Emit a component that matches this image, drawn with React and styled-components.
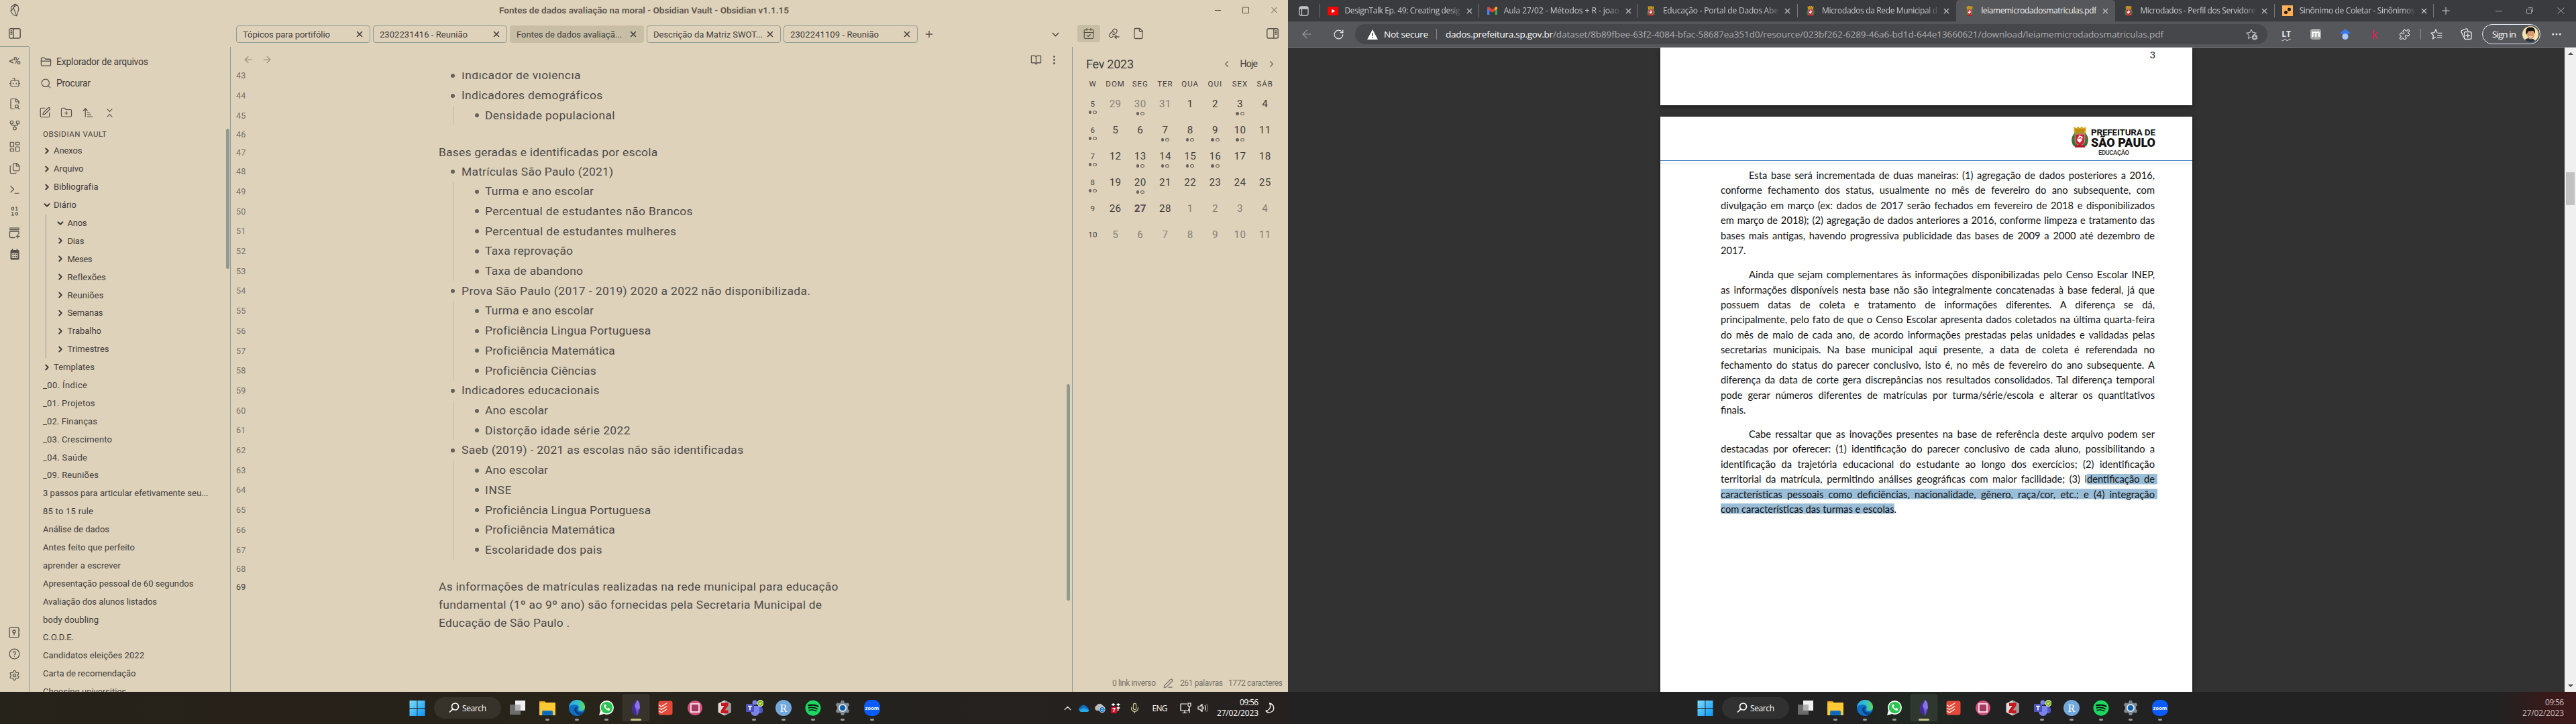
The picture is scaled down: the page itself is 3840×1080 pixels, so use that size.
import React, { useLayoutEffect, useRef } from "react";
import styled, { createGlobalStyle, css } from "styled-components";
import {
  Bot, FileSearch2, GitFork, LayoutDashboard, Files, Terminal, Binary, Settings,
  FolderClosed, Search, SquarePen, FolderPlus, ArrowUpNarrowWide, ChevronsDownUp,
  ChevronRight, ChevronDown, ChevronUp, ChevronLeft, X, Plus, ArrowLeft, ArrowRight,
  BookOpen, EllipsisVertical, CalendarCheck, File, PenLine, Puzzle, RotateCw,
  Mic, Ellipsis,
} from "lucide-react";
import { FaSpotify } from "react-icons/fa";

const Global = createGlobalStyle`
  * { box-sizing: border-box; }
  html, body { margin: 0; padding: 0; background: #323232; overflow: hidden; }
  svg { display: block; flex: none; }
`;

const plex = `Roboto, "Liberation Sans", sans-serif`;
const segoe = `"Open Sans", "Noto Sans", sans-serif`;
const c = {
  paper: "#dfd2ba", line: "#8f9a92", ink: "#3f3e3c", icon: "#55514a", muted: "#77736a",
  active: "#c8bea5",
};

/* ---------- text fitted to a measured width by tracking ---------- */
const FitSpan = styled.span`
  display: inline-block;
  white-space: pre;
  flex: none;
`;
function Fit({ w, children, className }) {
  const ref = useRef(null);
  useLayoutEffect(() => {
    const el = ref.current;
    el.style.letterSpacing = "0px";
    const n = el.textContent.length;
    const natural = el.getBoundingClientRect().width;
    if (w && n > 1) {
      const ls = (w - natural) / (n - 1);
      el.style.letterSpacing = ls + "px";
      el.style.marginRight = -ls + "px";
    }
  }, [w, children]);
  return <FitSpan ref={ref} className={className}>{children}</FitSpan>;
}

/* ---------- shell ---------- */
const Desktop = styled.div`
  display: grid;
  grid-template-columns: 1920px 1920px;
  width: 3840px;
  height: 1080px;
`;
const Screen = styled.div`
  display: flex;
  flex-direction: column;
  height: 1080px;
  overflow: hidden;
`;

/* ---------- notes window ---------- */
const NotesWindow = styled.div`
  display: flex;
  flex-direction: column;
  height: 1032px;
  background: ${c.paper};
  color: ${c.ink};
  font-family: ${plex};
  overflow: hidden;
`;
const TitleRow = styled.div`
  display: flex;
  align-items: center;
  height: 30px;
`;
const LogoCell = styled.div`
  width: 126px;
  padding-left: 15px;
`;
const Title = styled.div`
  flex: 1;
  text-align: center;
  font-size: 13.5px;
  font-weight: 600;
  color: #5c564c;
`;
const WinCell = styled.div`
  width: 42px;
  display: flex;
  justify-content: center;
  color: #5c564c;
`;
const TabRow = styled.div`
  display: flex;
  height: 40px;
`;
const Corner = styled.div`
  width: 43px;
  display: flex;
  align-items: center;
  justify-content: center;
  color: ${c.icon};
  border-bottom: 1px solid ${c.line};
`;
const NoteTabs = styled.div`
  display: flex;
  gap: 4px;
  padding: 8px 0 0 309px;
  width: 1555px;
  color: ${c.icon};
`;
const NoteTab = styled.div`
  display: flex;
  align-items: center;
  justify-content: space-between;
  width: 200px;
  height: 26px;
  padding: 0 8px 0 9px;
  border: 1px solid ${(p) => (p.$active ? c.active : c.line)};
  background: ${(p) => (p.$active ? c.active : "transparent")};
  border-radius: 4px;
  font-size: 13px;
  color: ${c.ink};
`;
const TabButton = styled.div`
  width: ${(p) => p.$w || 26}px;
  height: 26px;
  display: flex;
  align-items: center;
  justify-content: center;
  margin-left: ${(p) => (p.$end ? "auto" : "0")};
  margin-right: ${(p) => (p.$end ? "12px" : "0")};
`;
const SideTabs = styled.div`
  display: flex;
  flex: 1;
  gap: 3px;
  padding: 7px 14px 0 8px;
  color: ${c.icon};
`;
const SideTab = styled.div`
  width: 34px;
  height: 26px;
  border-radius: 4px;
  display: flex;
  align-items: center;
  justify-content: center;
  background: ${(p) => (p.$active ? c.active : "transparent")};
  margin-left: ${(p) => (p.$end ? "auto" : "0")};
  margin-right: ${(p) => (p.$end ? "-8px" : "0")};
`;
const NotesBody = styled.div`
  display: grid;
  grid-template-columns: 44px 300px 1255px 321px;
  height: 962px;
`;
const Ribbon = styled.div`
  display: flex;
  flex-direction: column;
  padding: 5px 0 9px;
  border-right: 1px solid ${c.line};
  color: ${c.icon};
`;
const RibbonCell = styled.div`
  height: 32px;
  display: flex;
  align-items: center;
  justify-content: center;
  font-size: 15px;
  font-weight: 500;
  letter-spacing: -1px;
`;
const Spacer = styled.div`
  flex: 1;
`;
const Explorer = styled.div`
  position: relative;
  display: flex;
  flex-direction: column;
  height: 962px;
  padding: 6px 0 0 16px;
  border-right: 1px solid ${c.line};
  overflow: hidden;
`;
const ExplorerAction = styled.div`
  display: flex;
  align-items: center;
  flex: none;
  gap: 7px;
  height: 32px;
  font-size: 14px;
  color: ${c.ink};
  svg { color: ${c.icon}; }
`;
const ExplorerTools = styled.div`
  display: flex;
  flex: none;
  height: 32px;
  margin: 12px 0 0 -9px;
  color: ${c.icon};
`;
const ToolCell = styled.div`
  width: 32px;
  display: flex;
  align-items: center;
  justify-content: center;
`;
const VaultName = styled.div`
  height: 27.5px;
  flex: none;
  padding: 0 0 0 4px;
  line-height: 32px;
  font-size: 11.5px;
`;
const TreeRow = styled.div`
  display: flex;
  align-items: center;
  flex: none;
  height: 26.9px;
  margin-left: ${(p) => (p.$nested ? "8px" : "0")};
  border-left: ${(p) => (p.$nested ? `1px solid ${c.line}` : "0")};
  padding-left: ${(p) => (p.$nested ? "15.5px" : "4px")};
  font-size: 13px;
  gap: 3.5px;
  svg { margin-left: -1.5px; }
`;
const Thumb = styled.div`
  position: absolute;
  border-radius: 3px;
  background: #8f9a92;
  top: ${(p) => p.$top}px;
  right: ${(p) => p.$right}px;
  width: 5px;
  height: ${(p) => p.$h}px;
`;
const Editor = styled.div`
  position: relative;
  display: flex;
  flex-direction: column;
  border-right: 1px solid ${c.line};
  overflow: hidden;
`;
const ViewHeader = styled.div`
  display: flex;
  align-items: center;
  height: 38px;
  flex: none;
  padding: 0 18px 0 18px;
  color: ${c.icon};
`;
const NavArrows = styled.div`
  display: flex;
  gap: 12px;
  color: #968e7c;
`;
const ViewActions = styled.div`
  display: flex;
  align-items: center;
  gap: 10px;
  margin-left: auto;
`;
const Scroll = styled.div`
  flex: 1;
  overflow: hidden;
`;
const Lines = styled.div`
  margin-top: -9.9px;
`;
const LineRow = styled.div`
  display: flex;
  min-height: ${(p) => (p.$list ? 29.7 : 27)}px;
  padding-left: 8px;
`;
const LineNo = styled.div`
  width: 302px;
  line-height: ${(p) => (p.$list ? 29.7 : 27)}px;
  font-size: 12.5px;
  letter-spacing: 0.1px;
  color: ${(p) => (p.$current ? c.ink : c.muted)};
`;
const LineText = styled.div`
  display: flex;
  align-items: center;
  font-size: 17.4px;
  line-height: 27px;
  font-weight: 400;
  color: #4c4b4a;
  ${(p) => p.$level === 1 && css`padding-left: 18px;`}
  ${(p) => p.$level === 2 && css`
    margin-left: 21px;
    border-left: 1px solid #c2b8a2;
    padding-left: 32px;
  `}
`;
const Bullet = styled.span`
  width: 6px;
  height: 6px;
  border-radius: 50%;
  background: #66625b;
  margin-right: ${(p) => (p.$level === 1 ? 10 : 9)}px;
`;
const Paragraph = styled.div`
  display: flex;
  flex-direction: column;
  align-items: flex-start;
  font-size: 17.4px;
  line-height: 27px;
  color: #4c4b4a;
`;
const RightPane = styled.div`
  display: flex;
  flex-direction: column;
  padding: 9px 0 0;
`;
const CalHead = styled.div`
  display: flex;
  align-items: center;
  height: 32px;
  padding: 0 17px 0 20px;
  font-size: 18px;
`;
const CalNav = styled.div`
  display: flex;
  align-items: center;
  gap: 13px;
  margin-left: auto;
  font-size: 14px;
  svg { color: ${c.muted}; }
`;
const CalGrid = styled.div`
  display: grid;
  grid-template-columns: 30px repeat(7, 37.2px);
  grid-template-rows: 24.5px;
  grid-auto-rows: 39px;
  margin-left: 15px;
`;
const CalLabel = styled.div`
  text-align: center;
  line-height: 28px;
  font-size: 11.5px;
  letter-spacing: 1px;
`;
const Day = styled.div`
  display: flex;
  flex-direction: column;
  align-items: center;
  padding-top: 9.5px;
  line-height: 20px;
  font-size: ${(p) => (p.$week ? 11.5 : 15.2)}px;
  letter-spacing: 0.4px;
  font-weight: ${(p) => (p.$today ? 700 : 400)};
  color: ${(p) => (p.$today ? "#5f4a55" : p.$dim ? "#85817a" : c.ink)};
`;
const Dots = styled.div`
  display: flex;
  gap: 2px;
  margin-top: ${(p) => (p.$week ? -0.5 : 1.5)}px;
`;
const Dot = styled.i`
  width: ${(p) => (p.$hollow ? 6 : 4.5)}px;
  height: 5px;
  border-radius: 50%;
  border: 1px solid #66625b;
  background: ${(p) => (p.$hollow ? "transparent" : "#66625b")};
`;
const Status = styled.div`
  display: flex;
  align-items: center;
  justify-content: flex-end;
  height: 26px;
  margin-top: auto;
  padding-right: 8px;
  font-size: 12px;
  color: ${c.muted};
`;
const StatusItem = styled.span`
  display: flex;
  margin-left: ${(p) => p.$gap || 8}px;
`;

/* ---------- custom line icons ---------- */
const GemLine = () => (
  <svg width="14" height="20" viewBox="0 0 14 20" fill="none" stroke="#55514a" strokeWidth="1.1" strokeLinejoin="round">
    <path d="M7.5 1 11.5 3.2 13 8.5 9.8 18.6 5 17.5 1.2 12.2 2 5z" />
    <path d="M7.5 1 5 6.5 1.2 12.2M5 6.5 9.8 18.6M5 6.5 8 3.6 11.5 3.2" />
  </svg>
);
const Panel = ({ flip }) => (
  <svg width="18" height="16" viewBox="0 0 18 16" fill="none" stroke="currentColor" strokeWidth="1.4">
    <rect x="0.8" y="0.8" width="16.4" height="14.2" rx="2" />
    <path d={flip ? "M10.8 1v14M12.6 4h2.8M12.6 6.5h2.8M12.6 9h2.8" : "M7.2 1v14M2.6 4h2.8M2.6 6.5h2.8M2.6 9h2.8"} />
  </svg>
);
const PlusBox = () => (
  <svg width="17" height="17" viewBox="0 0 17 17" fill="none" stroke="currentColor" strokeWidth="1.3" strokeLinecap="round">
    <path d="M1.5 1.2h14M1.5 3.6h14M15 10V7.5q0-1.5-1.5-1.5H3Q1.5 6 1.5 7.5V14q0 1.5 1.5 1.5h6M13.5 11v5M11 13.5h5" />
  </svg>
);
const CalSolid = () => (
  <svg width="14" height="17" viewBox="0 0 14 17">
    <rect x="0.5" y="2" width="13" height="14.5" rx="1.5" fill="#55514a" />
    <path d="M3.5 0v3M10.5 0v3" stroke="#55514a" strokeWidth="1.5" />
    <path d="M2.5 6.5h9v7.5h-9z" fill={c.paper} />
    <path d="M3.5 8.4h7M3.5 11.8h7" stroke="#55514a" strokeWidth="1.7" strokeDasharray="1.6 1.1" />
  </svg>
);
const VaultIcon = () => (
  <svg width="17" height="17" viewBox="0 0 17 17" fill="none" stroke="currentColor" strokeWidth="1.3">
    <rect x="1" y="1.2" width="14" height="14.5" rx="1.5" />
    <circle cx="8" cy="7" r="2" /><path d="M8 9v3.5M15.6 4v2M15.6 11v2" />
  </svg>
);
const HelpIcon = () => (
  <svg width="17" height="17" viewBox="0 0 24 24" fill="none" stroke="currentColor" strokeWidth="1.8" strokeLinecap="round">
    <circle cx="12" cy="12" r="10.5" /><path d="M9 9a3 3 0 0 1 5.8 1c0 2-2.8 2.4-2.8 4M12 17.5v.1" />
  </svg>
);
const LinkIn = () => (
  <svg width="17" height="17" viewBox="0 0 17 17" fill="none" stroke="currentColor" strokeWidth="1.3" strokeLinecap="round">
    <path d="M6.200 8.600c1.500 1.300 3.500.8 4.700-.5l1.600-2c2.200-3-2.200-6.700-4.700-3.800L6.600 3.700" />
    <path d="M8.800 6.200c-1.500-1.300-3.500-.8-4.700.5l-1.900 2.400c-2.200 3 2 6.300 4.500 3.500l.9-1" />
    <path d="M16 13h-6M12 10.800 9.800 13l2.200 2.300" />
  </svg>
);

const noteTabs = [
  ["Tópicos para portifólio", 130],
  ["2302231416 - Reunião", 131],
  ["Fontes de dados avaliaçã...", 157, true],
  ["Descrição da Matriz SWOT...", 163],
  ["2302241109 - Reunião", 132],
];
const tree = [
  ["Anexos", 42.5, "r"], ["Arquivo", 44.5, "r"], ["Bibliografia", 66, "r"], ["Diário", 34, "d"],
  ["Anos", 29, "d", 1], ["Dias", 25, "r", 1], ["Meses", 37, "r", 1], ["Reflexões", 57, "r", 1],
  ["Reuniões", 54, "r", 1], ["Semanas", 53, "r", 1], ["Trabalho", 50.5, "r", 1], ["Trimestres", 62, "r", 1],
  ["Templates", 61, "r"], ["_00. Índice", 66], ["_01. Projetos", 77.5], ["_02. Finanças", 81],
  ["_03. Crescimento", 103], ["_04. Saúde", 66], ["_09. Reuniões", 83],
  ["3 passos para articular efetivamente seu...", 246.5], ["85 to 15 rule", 75], ["Análise de dados", 99],
  ["Antes feito que perfeito", 137], ["aprender a escrever", 116], ["Apresentação pessoal de 60 segundos", 224.5],
  ["Avaliação dos alunos listados", 170], ["body doubling", 83], ["C.O.D.E.", 46],
  ["Candidatos eleições 2022", 151], ["Carta de recomendação", 138.5], ["Choosing universities", 124],
];
const lines = [
  [43, 1, "Indicador de violência", 177.5], [44, 1, "Indicadores demográficos", 209.5],
  [45, 2, "Densidade populacional", 193.5], [46, 0, "", 0],
  [47, 0, "Bases geradas e identificadas por escola", 325.5],
  [48, 1, "Matrículas São Paulo (2021)", 226], [49, 2, "Turma e ano escolar", 162],
  [50, 2, "Percentual de estudantes não Brancos", 309.5], [51, 2, "Percentual de estudantes mulheres", 285],
  [52, 2, "Taxa reprovação", 131], [53, 2, "Taxa de abandono", 146],
  [54, 1, "Prova São Paulo (2017 - 2019) 2020 a 2022 não disponibilizada.", 520],
  [55, 2, "Turma e ano escolar", 162], [56, 2, "Proficiência Lingua Portuguesa", 246.5],
  [57, 2, "Proficiência Matemática", 193], [58, 2, "Proficiência Ciências", 165],
  [59, 1, "Indicadores educacionais", 205.5], [60, 2, "Ano escolar", 94], [61, 2, "Distorção idade série 2022", 216.5],
  [62, 1, "Saeb (2019) - 2021 as escolas não são identificadas", 419.5], [63, 2, "Ano escolar", 94],
  [64, 2, "INSE", 39.5], [65, 2, "Proficiência Lingua Portuguesa", 246.5], [66, 2, "Proficiência Matemática", 193],
  [67, 2, "Escolaridade dos pais", 174.5], [68, 0, "", 0],
];
const weeks = [
  [5, 1, [29, 30, 31, 1, 2, 3, 4], [1, 5], [0, 1, 2]],
  [6, 1, [5, 6, 7, 8, 9, 10, 11], [2, 3, 4, 5], []],
  [7, 1, [12, 13, 14, 15, 16, 17, 18], [1, 2, 3, 4], []],
  [8, 1, [19, 20, 21, 22, 23, 24, 25], [1], []],
  [9, 0, [26, 27, 28, 1, 2, 3, 4], [], [3, 4, 5, 6]],
  [10, 0, [5, 6, 7, 8, 9, 10, 11], [], [0, 1, 2, 3, 4, 5, 6]],
];

function Notes() {
  const i = { size: 18, strokeWidth: 1.6 };
  return (
    <NotesWindow>
      <TitleRow>
        <LogoCell><GemLine /></LogoCell>
        <Title><Fit w={432}>Fontes de dados avaliação na moral - Obsidian Vault - Obsidian v1.1.15</Fit></Title>
        <WinCell><svg width="9" height="10"><path d="M0 5.5h9" stroke="currentColor" /></svg></WinCell>
        <WinCell><svg width="10" height="10"><path d="M.5 1h9v8.500h-9z" fill="none" stroke="currentColor" /></svg></WinCell>
        <WinCell><svg width="9" height="10"><path d="M.5 1 8.500 9M8.500 1 .5 9" stroke="currentColor" /></svg></WinCell>
      </TitleRow>
      <TabRow>
        <Corner><Panel /></Corner>
        <NoteTabs>
          {noteTabs.map(([t, w, a]) => (
            <NoteTab key={t} $active={a}><Fit w={w}>{t}</Fit><X size={14} strokeWidth={2.6} /></NoteTab>
          ))}
          <TabButton><Plus size={16} strokeWidth={2} /></TabButton>
          <TabButton $end><ChevronDown size={17} strokeWidth={2} /></TabButton>
        </NoteTabs>
        <SideTabs>
          <SideTab $active><CalendarCheck {...i} /></SideTab>
          <SideTab><LinkIn /></SideTab>
          <SideTab><File size={18} strokeWidth={1.7} /></SideTab>
          <SideTab $end><Panel flip /></SideTab>
        </SideTabs>
      </TabRow>
      <NotesBody>
        <Ribbon>
          <RibbonCell>&lt;%</RibbonCell>
          <RibbonCell><Bot {...i} /></RibbonCell>
          <RibbonCell><FileSearch2 {...i} /></RibbonCell>
          <RibbonCell><GitFork {...i} /></RibbonCell>
          <RibbonCell><LayoutDashboard {...i} /></RibbonCell>
          <RibbonCell><Files {...i} /></RibbonCell>
          <RibbonCell><Terminal {...i} /></RibbonCell>
          <RibbonCell><Binary {...i} /></RibbonCell>
          <RibbonCell><PlusBox /></RibbonCell>
          <RibbonCell><CalSolid /></RibbonCell>
          <Spacer />
          <RibbonCell><VaultIcon /></RibbonCell>
          <RibbonCell><HelpIcon /></RibbonCell>
          <RibbonCell><Settings size={17} strokeWidth={1.8} /></RibbonCell>
        </Ribbon>
        <Explorer>
          <ExplorerAction><FolderClosed size={17} strokeWidth={1.8} /><Fit w={137}>Explorador de arquivos</Fit></ExplorerAction>
          <ExplorerAction><Search size={17} strokeWidth={1.7} /><Fit w={51}>Procurar</Fit></ExplorerAction>
          <ExplorerTools>
            <ToolCell><SquarePen {...i} /></ToolCell>
            <ToolCell><FolderPlus {...i} /></ToolCell>
            <ToolCell><ArrowUpNarrowWide {...i} /></ToolCell>
            <ToolCell><ChevronsDownUp size={17} strokeWidth={1.7} /></ToolCell>
          </ExplorerTools>
          <VaultName><Fit w={95}>OBSIDIAN VAULT</Fit></VaultName>
          {tree.map(([t, w, k, nested], n) => (
            <TreeRow key={n} $nested={nested}>
              {k === "r" && <ChevronRight size={14} strokeWidth={3.4} />}
              {k === "d" && <ChevronDown size={14} strokeWidth={3.4} />}
              <Fit w={w}>{t}</Fit>
            </TreeRow>
          ))}
          <Thumb $top={122} $right={1} $h={209} />
        </Explorer>
        <Editor>
          <ViewHeader>
            <NavArrows><ArrowLeft size={16} strokeWidth={1.8} /><ArrowRight size={16} strokeWidth={1.8} /></NavArrows>
            <ViewActions><BookOpen size={17} strokeWidth={1.8} /><EllipsisVertical size={17} /></ViewActions>
          </ViewHeader>
          <Scroll>
            <Lines>
              {lines.map(([no, level, t, w]) => (
                <LineRow key={no} $list={level > 0}>
                  <LineNo $list={level > 0}>{no}</LineNo>
                  <LineText $level={level}>
                    {level > 0 && <Bullet $level={level} />}
                    <Fit w={w}>{t}</Fit>
                  </LineText>
                </LineRow>
              ))}
              <LineRow>
                <LineNo $current>69</LineNo>
                <Paragraph>
                  <Fit w={595.5}>As informações de matrículas realizadas na rede municipal para educação</Fit>
                  <Fit w={571}>fundamental (1º ao 9º ano) são fornecidas pela Secretaria Municipal de</Fit>
                  <Fit w={195}>Educação de São Paulo .</Fit>
                </Paragraph>
              </LineRow>
            </Lines>
          </Scroll>
          <Thumb $top={503} $right={3} $h={323} />
        </Editor>
        <RightPane>
          <CalHead>
            <Fit w={71}>Fev 2023</Fit>
            <CalNav><ChevronLeft size={15} strokeWidth={2.5} /><Fit w={26.5}>Hoje</Fit><ChevronRight size={15} strokeWidth={2.5} /></CalNav>
          </CalHead>
          <CalGrid>
            {["W", "DOM", "SEG", "TER", "QUA", "QUI", "SEX", "SÁB"].map((d) => <CalLabel key={d}>{d}</CalLabel>)}
            {weeks.map(([wk, dotted, days, dots, dim]) => (
              <React.Fragment key={wk}>
                <Day $week>{wk}{dotted ? <Dots $week><Dot /><Dot $hollow /></Dots> : null}</Day>
                {days.map((d, n) => (
                  <Day key={n} $dim={dim.includes(n)} $today={d === 27}>
                    {d}{dots.includes(n) && <Dots><Dot /><Dot $hollow /></Dots>}
                  </Day>
                ))}
              </React.Fragment>
            ))}
          </CalGrid>
          <Status>
            <StatusItem><Fit w={65}>0 link inverso</Fit></StatusItem>
            <StatusItem $gap={11}><PenLine size={15} strokeWidth={2} /></StatusItem>
            <StatusItem $gap={10}><Fit w={64}>261 palavras</Fit></StatusItem>
            <StatusItem><Fit w={81}>1772 caracteres</Fit></StatusItem>
          </Status>
        </RightPane>
      </NotesBody>
    </NotesWindow>
  );
}

/* ---------- browser window ---------- */
const Browser = styled.div`
  display: flex;
  flex-direction: column;
  height: 1032px;
  background: #323232;
  font-family: ${segoe};
  overflow: hidden;
`;
const TabStrip = styled.div`
  display: flex;
  align-items: center;
  height: 32px;
  background: #3a3b3e;
  color: #c9c9cb;
`;
const StripIcon = styled.div`
  flex: none;
  width: ${(p) => p.$w}px;
  display: flex;
  justify-content: center;
`;
const BTab = styled.div`
  position: relative;
  display: flex;
  align-items: center;
  flex: none;
  width: 237.2px;
  height: 32px;
  padding-left: 12px;
  background: ${(p) => (p.$active ? "#56575b" : "transparent")};
  border-radius: ${(p) => (p.$active ? "5px 5px 0 0" : 0)};
  &::before {
    content: "";
    position: absolute;
    left: 0;
    top: 6px;
    height: 20px;
    width: 1px;
    background: ${(p) => (p.$sep ? "#77787b" : "transparent")};
  }
`;
const CloseMark = styled.div`
  flex: none;
  margin-left: 7px;
`;
const Favicon = styled.div`
  flex: none;
  width: 16px;
  display: flex;
  justify-content: center;
  margin-right: 9.5px;
`;
const BTabText = styled.div`
  flex: none;
  width: 172px;
  overflow: hidden;
  white-space: nowrap;
  font-size: 12px;
  line-height: 18px;
  color: ${(p) => (p.$active ? "#f2f2f2" : "#cdcdcf")};
  ${(p) => !p.$active && css`mask-image: linear-gradient(90deg, #000 90%, transparent 102%);`}
`;
const NewTab = styled.div`
  display: flex;
  align-items: center;
  flex: none;
  height: 20px;
  padding-left: 9px;
  border-left: 1px solid #77787b;
`;
const WinGroup = styled.div`
  display: flex;
  margin-left: auto;
  color: #a4a4a6;
`;
const BWin = styled.div`
  width: 46px;
  display: flex;
  justify-content: center;
`;
const Toolbar = styled.div`
  display: flex;
  align-items: center;
  height: 39px;
  background: #56575b;
  border-bottom: 1px solid #7d7e83;
  color: #e6e6e7;
  font-size: 13.5px;
`;
const BarCell = styled.div`
  flex: none;
  width: ${(p) => p.$w || 44}px;
  display: flex;
  align-items: center;
  justify-content: center;
  opacity: ${(p) => (p.$off ? 0.5 : 1)};
`;
const Address = styled.div`
  display: flex;
  align-items: center;
  flex: none;
  width: 1360px;
  height: 30px;
  margin: 0 6px 0 6px;
  padding: 0 14px 0 18px;
  border-radius: 15px;
  background: #46474b;
  color: #fff;
  font-size: 13.5px;
`;
const AddrSep = styled.i`
  width: 1px;
  height: 16px;
  margin: 0 13px 0 12px;
  background: #8a8b8e;
`;
const Path = styled.span`
  color: #aeaeb0;
`;
const AddrEnd = styled.div`
  margin-left: auto;
  color: #b5b5b7;
`;
const LT = styled.b`
  font-size: 12px;
  line-height: 12px;
  text-decoration: underline wavy 1px;
  text-underline-offset: 2px;
`;
const Mbadge = styled.b`
  width: 16px;
  height: 16px;
  border-radius: 4px;
  background: #a6a6a6;
  color: #fff;
  font-size: 14px;
  line-height: 13px;
  text-align: center;
`;
const Kbadge = styled.span`
  color: #f2184f;
  font-size: 18px;
  line-height: 18px;
`;
const SignIn = styled.div`
  display: flex;
  align-items: center;
  justify-content: space-between;
  flex: none;
  width: 87px;
  height: 30px;
  margin-left: 2px;
  padding: 0 2px 0 14px;
  border: 1.5px solid #e3e9f2;
  border-radius: 15px;
  color: #fff;
`;
const Viewport = styled.div`
  display: flex;
  flex: 1;
  min-height: 0;
`;
const Canvas = styled.div`
  display: flex;
  flex-direction: column;
  gap: 17px;
  flex: 1;
  padding-left: 555px;
  overflow: hidden;
`;
const Sheet = styled.div`
  width: 793px;
  height: ${(p) => p.$h}px;
  flex: none;
  background: #fff;
  box-shadow: 0 2px 6px rgba(0, 0, 0, 0.5);
  font-family: Lato, "Open Sans", sans-serif;
  color: #111;
`;
const PageNo = styled.div`
  padding: 1px 55px 0 0;
  text-align: right;
  font-size: 14.2px;
  line-height: 20px;
`;
const Letterhead = styled.div`
  display: flex;
  justify-content: flex-end;
  gap: 4px;
  height: 66px;
  padding: 15px 55px 0 0;
  border-bottom: 1px solid #4a86c5;
  font-family: Roboto, sans-serif;
`;
const Words = styled.div`
  width: 96px;
  display: flex;
  flex-direction: column;
  padding-top: 2px;
`;
const WordTop = styled.div`
  font-size: 13.5px;
  font-weight: 700;
  line-height: 12px;
`;
const WordMain = styled.div`
  font-size: 18px;
  font-weight: 900;
  line-height: 20px;
`;
const WordSub = styled.div`
  padding-left: 11px;
  font-size: 9.5px;
  font-weight: 600;
  line-height: 10px;
  color: #444;
`;
const SecondRule = styled.div`
  height: 2px;
  margin-top: 3px;
  background: #e8eff7;
`;
const Article = styled.div`
  padding: 5px 0 0 90px;
  width: 737px;
`;
const ParaBlock = styled.div`
  margin-bottom: 13.5px;
`;
const PLine = styled.div`
  height: 22.45px;
  line-height: 22.45px;
  font-size: 14.7px;
  white-space: nowrap;
  text-align: justify;
  text-align-last: ${(p) => (p.$last ? "left" : "justify")};
  padding-left: ${(p) => (p.$first ? 42 : 0)}px;
`;
const Mark = styled.mark`
  display: inline;
  padding: 0 ${(p) => (p.$bleed ? 4 : 0)}px 0 0;
  margin-right: ${(p) => (p.$bleed ? -4 : 0)}px;
  background: linear-gradient(#9abdd8, #9abdd8) center / 100% 15.5px no-repeat;
  color: inherit;
`;
const Bar = styled.div`
  width: 17px;
  display: flex;
  flex-direction: column;
  align-items: center;
  background: #f0f0f0;
`;
const BarArrow = styled.i`
  border: 4px solid transparent;
  border-${(p) => (p.$down ? "top" : "bottom")}: 4px solid #4f4f4f;
  margin: ${(p) => (p.$down ? "auto 0 3px" : "3px 0 0")};
`;
const BarThumb = styled.i`
  width: 13px;
  height: 49px;
  margin-top: 175px;
  background: #c1c1c1;
`;

const Crest = ({ w, h }) => (
  <svg width={w} height={h} viewBox="0 0 24 31" preserveAspectRatio="none">
    <path d="M3 1h3v1h2V0h3v2h2V0h3v2h2V1h3l-1 9H4z" fill="#d9a520" />
    <path d="M5 5h14M6 8h12" stroke="#8f6408" strokeWidth="1" />
    <path d="M4 10C-1 15-1 23 3 29h18c4-6 4-14-1-19z" fill="#2e7a3a" />
    <circle cx="2.5" cy="17" r="1" fill="#cf2233" /><circle cx="21.5" cy="17" r="1" fill="#cf2233" />
    <circle cx="2.8" cy="24" r="1" fill="#cf2233" /><circle cx="21.2" cy="24" r="1" fill="#cf2233" />
    <path d="M5 11h14v9c0 5-3 7-7 8-4-1-7-3-7-8z" fill="#cf2233" stroke="#f3d9d9" strokeWidth=".6" />
    <path d="m8 19 3-6 5 2-1 5-3 4-3-2z" fill="#fff" />
    <path d="m10 18 3-2 1 3" stroke="#cf2233" fill="none" />
    <path d="M4 28q8-2 16 0l-1 3H5z" fill="#b5192b" />
  </svg>
);
const favs = {
  yt: <svg width="16" height="13" viewBox="0 0 16 13"><rect width="16" height="13" rx="3" fill="#f00" /><path d="m6.300 3.600 5 2.900-5 2.900z" fill="#fff" /></svg>,
  gm: <svg width="15" height="12" viewBox="0 0 15 12"><path d="M0 1.500V12h3.400V5z" fill="#4285f4" /><path d="M15 1.500V12h-3.400V5z" fill="#34a853" /><path d="M0 1.800C0 0 2 0 3 .7l4.500 3.500L12 .7c1-.7 3-.7 3 1.100V3L7.500 8.700 0 3z" fill="#ea4335" /><path d="M11.600 1v4.500L15 3V1.800C15 0 13 0 12 .7z" fill="#fbbc04" /></svg>,
  sp: <Crest w={12} h={15} />,
  si: <svg width="16" height="16"><rect width="16" height="16" fill="#ffb057" /><circle cx="10.5" cy="6" r="2.5" fill="#1a1a1a" /><circle cx="5.5" cy="10.5" r="2.5" fill="#1a1a1a" /></svg>,
};
const browserTabs = [
  ["yt", "DesignTalk Ep. 49: Creating desig", true],
  ["gm", "Aula 27/02 - Métodos + R - joao", true],
  ["sp", "Educação - Portal de Dados Abe", true],
  ["sp", "Microdados da Rede Municipal d", true],
  ["sp", "leiamemicrodadosmatriculas.pdf", false, true],
  ["sp", "Microdados - Perfil dos Servidore", false],
  ["si", "Sinônimo de Coletar - Sinônimos", true],
];
const paragraphs = [
  [
    "Esta base será incrementada de duas maneiras: (1) agregação de dados posteriores a 2016,",
    "conforme fechamento dos status, usualmente no mês de fevereiro do ano subsequente, com",
    "divulgação em março (ex: dados de 2017 serão fechados em fevereiro de 2018 e disponibilizados",
    "em março de 2018); (2) agregação de dados anteriores a 2016, conforme limpeza e tratamento das",
    "bases mais antigas, havendo progressiva publicidade das bases de 2009 a 2000 até dezembro de",
    "2017.",
  ],
  [
    "Ainda que sejam complementares às informações disponibilizadas pelo Censo Escolar INEP,",
    "as informações disponíveis nesta base não são integralmente concatenadas à base federal, já que",
    "possuem datas de coleta e tratamento de informações diferentes. A diferença se dá,",
    "principalmente, pelo fato de que o Censo Escolar apresenta dados coletados na última quarta-feira",
    "do mês de maio de cada ano, de acordo informações prestadas pelas unidades e validadas pelas",
    "secretarias municipais. Na base municipal aqui presente, a data de coleta é referendada no",
    "fechamento do status do parecer conclusivo, isto é, no mês de fevereiro do ano subsequente. A",
    "diferença da data de corte gera discrepâncias nos resultados consolidados. Tal diferença temporal",
    "pode gerar números diferentes de matrículas por turma/série/escola e alterar os quantitativos",
    "finais.",
  ],
  [
    "Cabe ressaltar que as inovações presentes na base de referência deste arquivo podem ser",
    "destacadas por oferecer: (1) identificação do parecer conclusivo de cada aluno, possibilitando a",
    "identificação da trajetória educacional do estudante ao longo dos exercícios; (2) identificação",
    <>territorial da matrícula, permitindo análises geográficas com maior facilidade; (3) i<Mark $bleed>dentificação de</Mark></>,
    <Mark $bleed>características pessoais como deficiências, nacionalidade, gênero, raça/cor, etc.; e (4) integração</Mark>,
    <><Mark>com características das turmas e escolas</Mark>.</>,
  ],
];

function Web() {
  return (
    <Browser>
      <TabStrip>
        <StripIcon $w={47}>
          <svg width="15" height="15" fill="none" stroke="#c9c9cb" strokeWidth="1.3"><rect x="1" y="1" width="13" height="13" rx="2.5" /><path d="M1 3h13" strokeWidth="3" /><path d="M4.500 4v10" /></svg>
        </StripIcon>
        {browserTabs.map(([f, t, sep, active]) => (
          <BTab key={t} $active={active} $sep={sep}>
            <Favicon>{favs[f]}</Favicon>
            <BTabText $active={active}><Fit w={172}>{t}</Fit></BTabText>
            <CloseMark><X size={13} strokeWidth={2} /></CloseMark>
          </BTab>
        ))}
        <NewTab><Plus size={18} strokeWidth={1.4} /></NewTab>
        <WinGroup>
          <BWin><svg width="10" height="10"><path d="M0 5.500h10" stroke="currentColor" /></svg></BWin>
          <BWin><svg width="10" height="10" fill="none" stroke="currentColor"><rect x=".5" y="2.5" width="7" height="7" rx="1" /><path d="M3 .5h5q1.500 0 1.500 1.500v5" /></svg></BWin>
          <BWin><svg width="11" height="10"><path d="M.5.5l10 9M10.500.5l-10 9" stroke="currentColor" /></svg></BWin>
        </WinGroup>
      </TabStrip>
      <Toolbar>
        <BarCell $w={56} $off><ArrowLeft size={20} strokeWidth={1.3} /></BarCell>
        <BarCell $w={38}><RotateCw size={17} strokeWidth={1.6} /></BarCell>
        <Address>
          <svg width="16" height="15" viewBox="0 0 16 15"><path d="M8 0l8 15H0z" fill="#fff" /><path d="M8 5v5M8 11.300v1.600" stroke="#46474b" strokeWidth="1.5" /></svg>
          <StatusItem $gap={9}><Fit w={66}>Not secure</Fit></StatusItem>
          <AddrSep />
          <Fit w={160}>dados.prefeitura.sp.gov.br</Fit>
          <Path><Fit w={910}>/dataset/8b89fbee-63f2-4084-bfac-58687ea351d0/resource/023bf262-6289-46a6-bd1d-644e13660621/download/leiamemicrodadosmatriculas.pdf</Fit></Path>
          <AddrEnd>
            <svg width="18" height="17" viewBox="0 0 18 17" fill="none" stroke="currentColor" strokeWidth="1.2"><path d="m8 1 2.100 4.400 4.900.7-3.500 3.400M8 1 5.900 5.400 1 6.100l3.500 3.400-.8 4.900L8 12" /><circle cx="13" cy="12.5" r="4.3" fill="#b5b5b7" stroke="none" /><path d="M13 10.500v4M11 12.500h4" stroke="#46474b" /></svg>
          </AddrEnd>
        </Address>
        <BarCell><LT>LT</LT></BarCell>
        <BarCell><Mbadge>m</Mbadge></BarCell>
        <BarCell><svg width="16" height="17" viewBox="0 0 16 17"><path d="M8 0 0 6.500 4 8h8l4-1.500z" fill="#3b78e7" /><circle cx="8" cy="11.5" r="4.5" fill="#a9c8f8" /></svg></BarCell>
        <BarCell><Kbadge>k</Kbadge></BarCell>
        <BarCell><Puzzle size={17} strokeWidth={1.6} /></BarCell>
        <BarCell $w={4}><svg width="1" height="16"><path d="M.5 0v16" stroke="#8a8b8e" /></svg></BarCell>
        <BarCell><svg width="18" height="17" viewBox="0 0 18 17" fill="none" stroke="currentColor" strokeWidth="1.3" strokeLinecap="round"><path d="M10 6 8 1 5.800 5.700 1 6.300l3.500 3.500-.9 5L7.500 12.500M11.500 6.300H17M10.500 9.800H17M10.500 13.300H17" /></svg></BarCell>
        <BarCell><svg width="17" height="18" viewBox="0 0 17 18" fill="none" stroke="currentColor" strokeWidth="1.3" strokeLinecap="round"><path d="M4.500 13.500 1 5.500Q.6 4 2 3.300L8 1q1.500-.4 2.200 1l.6 1.500" /><rect x="5.5" y="5.5" width="10.5" height="11" rx="2" /><path d="M10.750 8.300v5.400M8 11h5.500" /></svg></BarCell>
        <SignIn>
          <Fit w={36}>Sign in</Fit>
          <svg width="24" height="24" viewBox="0 0 24 24"><clipPath id="av"><circle cx="12" cy="12" r="12" /></clipPath><g clipPath="url(#av)"><rect width="24" height="24" fill="#f3e3ad" /><path d="M2 24c1-5 5-6 9-6s8 2 9 6z" fill="#273347" /><ellipse cx="12.5" cy="12" rx="5.5" ry="7.5" fill="#d99a72" /><path d="M6 13C3 3 9 1 13 1.500c5 .5 7 4 5.500 10L16.500 7 9 7.500z" fill="#1d1715" /><path d="M10 15.500q2.500 1.500 5 0" stroke="#fff" fill="none" /></g></svg>
        </SignIn>
        <BarCell $w={48}><Ellipsis size={18} strokeWidth={2} /></BarCell>
      </Toolbar>
      <Viewport>
        <Canvas>
          <Sheet $h={86}><PageNo>3</PageNo></Sheet>
          <Sheet $h={1000}>
            <Letterhead>
              <Crest w={25} h={31} />
              <Words>
                <WordTop><Fit w={96}>PREFEITURA DE</Fit></WordTop>
                <WordMain><Fit w={96}>SÃO PAULO</Fit></WordMain>
                <WordSub><Fit w={46}>EDUCAÇÃO</Fit></WordSub>
              </Words>
            </Letterhead>
            <SecondRule />
            <Article>
              {paragraphs.map((ls, p) => (
                <ParaBlock key={p}>
                  {ls.map((l, n) => <PLine key={n} $first={n === 0} $last={n === ls.length - 1}>{l}</PLine>)}
                </ParaBlock>
              ))}
            </Article>
          </Sheet>
        </Canvas>
        <Bar><BarArrow /><BarThumb /><BarArrow $down /></Bar>
      </Viewport>
    </Browser>
  );
}

/* ---------- taskbar ---------- */
const TaskbarBox = styled.div`
  display: flex;
  align-items: center;
  height: 48px;
  padding-left: 599.5px;
  background: ${(p) => (p.$red
    ? "radial-gradient(circle 90px at 945px 24px, #1f2a20, transparent), linear-gradient(90deg, #222 94%, #3a1919 98%, #3c1a1b)"
    : "linear-gradient(90deg, #26231b, #272119 20%, #28241a 45%, #24221f 65%, #26211f)")};
  font-family: ${segoe};
  color: #fff;
`;
const TaskCell = styled.div`
  display: flex;
  flex-direction: column;
  align-items: center;
  width: ${(p) => (p.$on ? 40 : 44)}px;
  height: 40px;
  margin: 0 ${(p) => (p.$on ? 2 : 0)}px;
  padding-top: 8px;
  border-radius: 4px;
  background: ${(p) => (p.$on ? "rgba(255,255,255,0.07)" : "transparent")};
  box-shadow: ${(p) => (p.$on ? "inset 0 0 0 1px rgba(255,255,255,0.05)" : "none")};
  &::after {
    content: "";
    width: ${(p) => (p.$on ? 16 : 6)}px;
    height: 3px;
    border-radius: 2px;
    margin-top: 4px;
    background: ${(p) => (p.$on ? "#c6c184" : p.$run ? "#9b9994" : "transparent")};
  }
`;
const SearchPill = styled.div`
  display: flex;
  align-items: center;
  gap: 4px;
  width: 100px;
  height: 32px;
  margin: 0 3px 0 3.5px;
  padding-left: 22px;
  border-radius: 16px;
  background: rgba(255, 255, 255, 0.07);
  font-size: 12px;
  font-weight: 500;
`;
const Tray = styled.div`
  display: flex;
  align-items: center;
  height: 48px;
  margin-left: auto;
  padding-right: ${(p) => p.$pr}px;
`;
const TrayCell = styled.div`
  display: flex;
  align-items: center;
  justify-content: center;
  width: ${(p) => p.$w || 24}px;
  font-size: 12px;
`;
const Clock = styled.div`
  display: flex;
  flex-direction: column;
  align-items: flex-end;
  width: 73px;
  font-size: 12px;
  line-height: 16px;
  color: ${(p) => (p.$dim ? "#cdbfbf" : "#fff")};
`;

const S = ({ children, w = 24 }) => <svg width={w} height="24" viewBox={`0 0 ${w} 24`}>{children}</svg>;
const taskIcons = [
  [<S><rect x="8" y="1" width="15" height="15" fill="#f1f1f1" /><rect x="0" y="7" width="16" height="15" fill="#6c6c6c" /><rect x="8" y="7" width="8" height="9" fill="#b0b0b0" /></S>],
  [<S><path d="M0 2h8l2 2.500H0z" fill="#e09c10" /><rect y="4" width="24" height="19" rx="1" fill="#fdc935" /><path d="M4 23v-5q0-2 2-2h12q2 0 2 2v5z" fill="#1173c0" /><path d="M7 19h10v1.500H7z" fill="#0c57a0" /></S>, 1],
  [<S><defs><linearGradient id="eg" x1="0" x2="1"><stop offset="0" stopColor="#2aa6e8" /><stop offset=".6" stopColor="#35c1c5" /><stop offset="1" stopColor="#62d94d" /></linearGradient></defs><circle cx="12" cy="12" r="12" fill="#0f6fc6" /><path d="M0 11C1 4 6 0 12 0c7 0 12 5 12 10.500 0 4-3 6-6.500 6-3 0-4-1.500-3-3C16 10 13 7 9 7c-4 0-7 1.500-9 4z" fill="url(#eg)" /><path d="M8 14c0 5 4 8 8.500 8.500 2.500-.6 4.800-2.500 6-4.700-5 2.500-10 1-11-2.300-.6-2 .5-4 2-4.500C10.500 10 8 11.500 8 14z" fill="#0b3f80" /></S>, 1],
  [<S><circle cx="12.5" cy="11.5" r="10.5" fill="#fff" /><path d="m1 23 2-7 5 5z" fill="#fff" /><circle cx="12.5" cy="11.5" r="8.8" fill="#2bc450" /><path d="M8.500 7.500c-1.500 3 4 9 8 8.500l1-2.500-2.500-1.500-1.500 1c-1.500-.5-2.500-2-2.800-3l1-1-1-2.500z" fill="#fff" /></S>, 1],
  [<S><path d="M14 0 17 4 18 12 14 24 7 19 6 11 9 5z" fill="#6a4fd0" /><path d="m14 0-4 9 4 15L7 19 6 11 9 5z" fill="#3f2c94" /><path d="m14 0 3 4 1 8-4 3-4-6z" fill="#8a74ea" /></S>, 1, 1],
  [<S><rect x="1.5" y="1.5" width="21" height="21" rx="3" fill="#e5493a" /><path d="m2 7.500 4 2.500L14 5M2 12l4 2.500L14 9.500M2 16.500 6 19l8-5" fill="none" stroke="#fff" strokeWidth="1.4" /></S>],
  [<S><circle cx="12" cy="12" r="11" fill="#d3517e" /><rect x="6" y="6" width="12" height="12" fill="#a33a60" stroke="#fff" strokeWidth="1.5" /></S>],
  [<S><path d="m12 0.500 9.500 5v13L12 23.500l-9.500-5v-13z" fill="#dcdcdc" /><path d="m12 0.500 9.500 5v13L12 23.500z" fill="#9a9a9a" /><path d="M7 4.500h10.500v4l-5 7h5v4.500H6.500v-4l5-7H7z" fill="#c9151b" /></S>],
  [<S w={28}><circle cx="15" cy="4" r="3.5" fill="#7b83eb" /><circle cx="23.5" cy="9" r="2.5" fill="#5059c9" /><rect x="17" y="11" width="10" height="9" rx="3" fill="#5059c9" /><path d="M9 9h13v8c0 4-3 7-6.500 7S9 21 9 17z" fill="#7b83eb" /><rect x="2" y="6" width="12" height="12" rx="1" fill="#4b53bc" /><path d="M5 9.500h6M8 9.500v6" stroke="#fff" strokeWidth="1.7" /><circle cx="23.5" cy="5" r="4.5" fill="#84b817" stroke="#fff" /><path d="m21.500 5 1.500 1.500 2.500-3" stroke="#fff" fill="none" /></S>, 1],
  [<S><circle cx="12" cy="12" r="12" fill="#74a8db" /><text x="12" y="17.5" textAnchor="middle" fontFamily="Liberation Serif" fontSize="16" fill="#fff">R</text></S>, 1],
  ["spotify", 1],
  [<S><path d="M10 1h4l.8 3 2.500 1.200 3-1 2 3.500-2.200 2.300v4l2.200 2.300-2 3.500-3-1-2.500 1.200L14 23h-4l-.8-3-2.500-1.200-3 1-2-3.500L3.900 14v-4L1.700 7.700l2-3.500 3 1L9.200 4z" fill="#7f8994" /><circle cx="12" cy="12" r="6" fill="#e8eef2" /><circle cx="12" cy="12" r="4.3" fill="#0f61ab" /></S>, 1],
  [<S><rect width="24" height="24" rx="10" fill="#0b5cff" /><text x="12" y="14.5" textAnchor="middle" fontFamily="Open Sans" fontWeight="700" fontSize="7.5" fill="#fff">zoom</text></S>, 1],
];
const SpotifyDisc = styled.div`
  width: 24px;
  height: 24px;
  border-radius: 50%;
  background: #0c0c0c;
  color: #1ed760;
`;

function Taskbar({ right }) {
  return (
    <TaskbarBox $red={right}>
      <TaskCell>
        <svg width="24" height="24"><defs><linearGradient id={right ? "wr" : "wl"} gradientUnits="userSpaceOnUse" x1="0" y1="0" x2="24" y2="24"><stop offset="0" stopColor="#7fe0ff" /><stop offset="1" stopColor="#0a93f5" /></linearGradient></defs><path d="M.5 1h11v11H.5zM12.500 1h11v11h-11zM.5 13h11v11H.5zM12.500 13h11v11h-11z" fill={`url(#${right ? "wr" : "wl"})`} /></svg>
      </TaskCell>
      <SearchPill>
        <svg width="16" height="16" fill="none" stroke="#fff" strokeWidth="1.7" strokeLinecap="round"><circle cx="9.5" cy="6" r="5" /><path d="M5.800 9.800 1.500 14" /></svg>
        <Fit w={36}>Search</Fit>
      </SearchPill>
      {taskIcons.map(([icon, run, on], n) => (
        <TaskCell key={n} $run={run} $on={on}>
          {icon === "spotify" ? <SpotifyDisc><FaSpotify size={24} /></SpotifyDisc> : icon}
        </TaskCell>
      ))}
      {right ? (
        <Tray $pr={18}><Clock $dim><Fit w={28}>09:56</Fit><Fit w={62}>27/02/2023</Fit></Clock></Tray>
      ) : (
        <Tray $pr={11}>
          <TrayCell><ChevronUp size={17} strokeWidth={1.8} /></TrayCell>
          <TrayCell><svg width="17" height="11" viewBox="0 0 17 11"><path d="M4 11a4 4 0 0 1-.5-7.500A5.500 5.500 0 0 1 13 3.500 4 4 0 0 1 13.500 11z" fill="#0f6fc0" /><path d="M4 11 2 8l7-3 7.500 3.500q-.7 2.500-3 2.500z" fill="#28a8ea" /></svg></TrayCell>
          <TrayCell><svg width="17" height="14" viewBox="0 0 17 14"><path d="M4 11a4 4 0 0 1-.5-7.500A5.500 5.500 0 0 1 13 3.500 4 4 0 0 1 13.500 11z" fill="#b9b9b9" /><circle cx="12" cy="9.5" r="4.5" fill="#fff" /><circle cx="12" cy="9.5" r="3.8" fill="#1273c4" /><path d="M10 9q2-2.500 4 0M14 10.200q-2 2.500-4 0" stroke="#fff" fill="none" /></svg></TrayCell>
          <TrayCell><svg width="16" height="16" viewBox="0 0 16 16"><path d="m4.500 1 3 2-3 2-3-2zM12 1l3 2-3 2-3-2zM12 6l3 2-3 2-3-2zM10 11l2-1 1 1-2 1.500z" fill="#fff" /><rect x="1" y="6.5" width="9" height="9.5" rx="2" fill="#d90b2c" /><text x="5.5" y="14.3" textAnchor="middle" fontFamily="Open Sans" fontWeight="700" fontSize="8" fill="#fff">7</text></svg></TrayCell>
          <TrayCell $w={32}><Mic size={17} strokeWidth={1.6} color="#d3cf94" /></TrayCell>
          <TrayCell $w={44}><Fit w={23}>ENG</Fit></TrayCell>
          <TrayCell $w={32}><svg width="17" height="17" viewBox="0 0 17 17" fill="none" stroke="#fff" strokeWidth="1.2"><path d="M10 2H1v10h12V9M7 12v3M3.500 15.500h7M14 6v9.500M12 1h4v3.500q0 1.500-2 1.500t-2-1.500z" /></svg></TrayCell>
          <TrayCell $w={20}><svg width="17" height="14" viewBox="0 0 17 14" fill="none" stroke="#fff" strokeWidth="1.2" strokeLinejoin="round"><path d="M1 5h2.500L7 1.500v11L3.500 9H1zM9 5q1.500 2 0 4M11 3q3 4 0 8" /><path d="M13.500 1q4 6 0 12" stroke="#777" /></svg></TrayCell>
          <Clock><Fit w={28}>09:56</Fit><Fit w={62}>27/02/2023</Fit></Clock>
          <TrayCell $w={33}><svg width="14" height="16" viewBox="0 0 14 16" fill="none" stroke="#fff" strokeWidth="1.3" strokeLinejoin="round"><path d="M6.500 1C14 3 15 12 8 14.500 5 15.400 2.500 14.500 1 12.500 6 12 9.500 7 6.500 1z" /></svg></TrayCell>
        </Tray>
      )}
    </TaskbarBox>
  );
}

export default function App() {
  return (
    <>
      <Global />
      <Desktop>
        <Screen><Notes /><Taskbar /></Screen>
        <Screen><Web /><Taskbar right /></Screen>
      </Desktop>
    </>
  );
}
